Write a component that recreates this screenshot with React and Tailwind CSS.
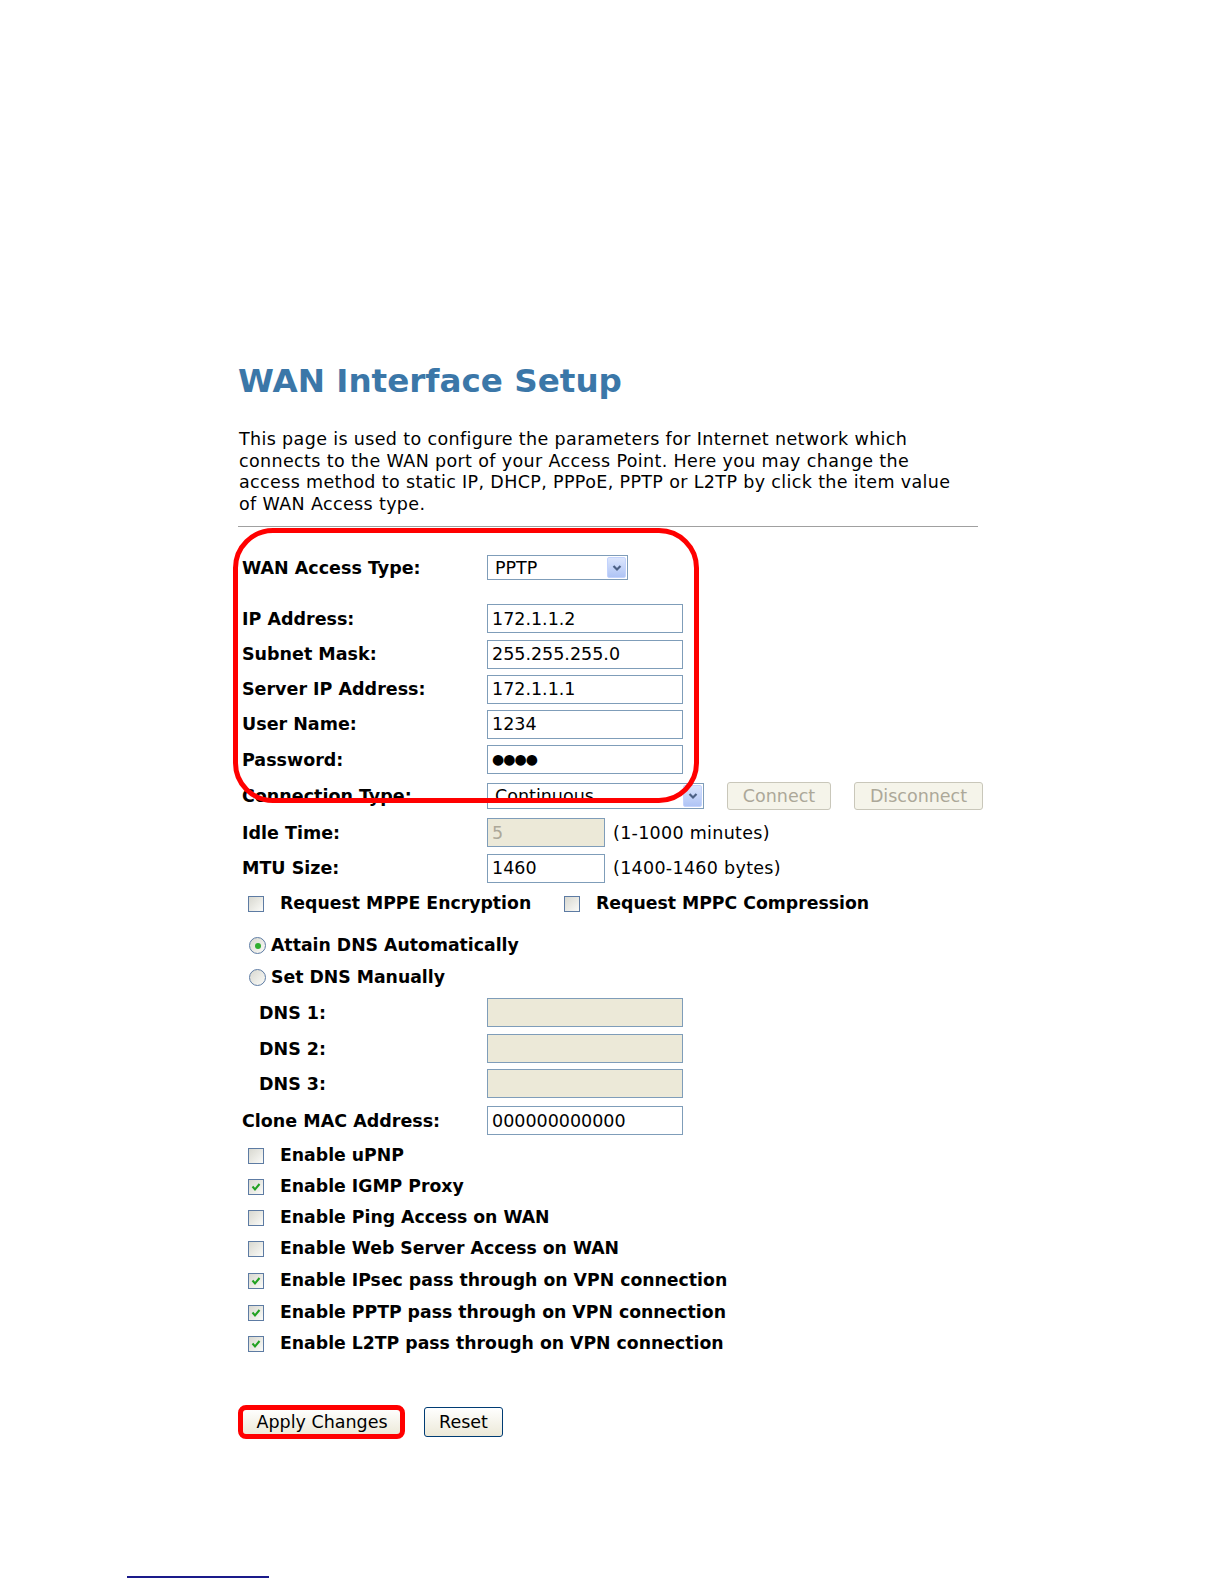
import React from "react";

const inputCls =
  "w-[196px] h-[29px] border border-[#7f9db9] bg-white px-[4px] text-[17.5px] text-black outline-none";
const disabledInputCls =
  "w-[196px] h-[29px] border border-[#7f9db9] bg-[#ece9d8] px-[4px] text-[17.5px] text-[#aca899] outline-none";

function Chevron() {
  return (
    <svg width="10" height="8" viewBox="0 0 10 8">
      <polyline
        points="1.5,2 5,5.5 8.5,2"
        fill="none"
        stroke="#4d6185"
        strokeWidth="2.2"
      />
    </svg>
  );
}

function Select({ value, w, h }) {
  return (
    <div className={`${w} ${h} border border-[#7f9db9] bg-white flex items-center`}>
      <span className="pl-[7px] text-[17.5px] text-black">{value}</span>
      <span className="ml-auto mr-px h-[calc(100%-2px)] w-[19px] rounded-[2px] border border-[#c3d3fd] bg-gradient-to-b from-[#dbe5fc] to-[#afc4f5] flex items-center justify-center">
        <Chevron />
      </span>
    </div>
  );
}

function Checkbox({ checked }) {
  return (
    <span className="w-[16px] h-[16px] shrink-0 border border-[#5d7ba3] bg-gradient-to-br from-[#d8d8d0] to-[#fbfbf8] flex items-center justify-center">
      {checked && (
        <svg width="12" height="12" viewBox="0 0 12 12">
          <polyline
            points="2.5,5.5 5,8.5 9.5,3"
            fill="none"
            stroke="#21a121"
            strokeWidth="2"
          />
        </svg>
      )}
    </span>
  );
}

function Radio({ checked }) {
  return (
    <span className="w-[17px] h-[17px] shrink-0 rounded-full border border-[#5d7ba3] bg-gradient-to-br from-[#d8d8d0] to-[#fbfbf8] flex items-center justify-center">
      {checked && (
        <span className="w-[6px] h-[6px] rounded-full bg-[#2fae2f]" />
      )}
    </span>
  );
}

function Label({ children }) {
  return (
    <div className="w-[245px] shrink-0 font-bold text-[17.5px] text-black whitespace-nowrap">
      {children}
    </div>
  );
}

function CheckRow({ h, checked, children }) {
  return (
    <div className={`${h} flex items-center pl-[6px]`}>
      <Checkbox checked={checked} />
      <span className="ml-[16px] font-bold text-[17.3px] text-black whitespace-nowrap">
        {children}
      </span>
    </div>
  );
}

export default function App() {
  return (
    <div className="min-h-[1584px] bg-white font-['DejaVu_Sans','Liberation_Sans',sans-serif] text-black">
      <div className="pl-[239px] pt-[361px]">
        <h1 className="-ml-px h-[40px] leading-[40px] text-[32.6px] font-bold text-[#3b77a8] whitespace-nowrap">
          WAN Interface Setup
        </h1>
        <p className="mt-[28px] text-[17.5px] leading-[21.7px] tracking-[0.36px] text-black whitespace-nowrap">
          This page is used to configure the parameters for Internet network which
          <br />
          connects to the WAN port of your Access Point. Here you may change the
          <br />
          access method to static IP, DHCP, PPPoE, PPTP or L2TP by click the item value
          <br />
          of WAN Access type.
        </p>
        <div className="mt-[10px] -ml-px w-[740px] h-px bg-[#a0a0a0]" />

        <div className="relative mt-[23px] pl-[3px]">
          <div className="h-[36px] flex items-center">
            <Label>WAN Access Type:</Label>
            <Select value="PPTP" w="w-[141px]" h="h-[25px]" />
          </div>
          <div className="h-[15px]" />
          <div className="h-[36px] flex items-center">
            <Label>IP Address:</Label>
            <input readOnly className={inputCls} value="172.1.1.2" />
          </div>
          <div className="h-[35px] flex items-center">
            <Label>Subnet Mask:</Label>
            <input readOnly className={inputCls} value="255.255.255.0" />
          </div>
          <div className="h-[35px] flex items-center">
            <Label>Server IP Address:</Label>
            <input readOnly className={inputCls} value="172.1.1.1" />
          </div>
          <div className="h-[35px] flex items-center">
            <Label>User Name:</Label>
            <input readOnly className={inputCls} value="1234" />
          </div>
          <div className="h-[36px] flex items-center">
            <Label>Password:</Label>
            <div className="w-[196px] h-[29px] border border-[#7f9db9] bg-white pl-[4px] flex items-center text-[14px] tracking-[-1px] text-black">
              ●●●●
            </div>
          </div>
          <div className="h-[37px] flex items-center">
            <Label>Connection Type:</Label>
            <Select value="Continuous" w="w-[217px]" h="h-[26px]" />
            <button className="ml-[23px] w-[104px] h-[28px] rounded-[3px] border border-[#c9c7ba] bg-[#f5f4ea] text-[17.5px] text-[#aca899]">
              Connect
            </button>
            <button className="ml-[23px] w-[129px] h-[28px] rounded-[3px] border border-[#c9c7ba] bg-[#f5f4ea] text-[17.5px] text-[#aca899]">
              Disconnect
            </button>
          </div>
          <div className="h-[36px] flex items-center">
            <Label>Idle Time:</Label>
            <input
              readOnly
              className="w-[118px] h-[29px] border border-[#7f9db9] bg-[#ece9d8] px-[4px] text-[17.5px] text-[#aca899] outline-none"
              value="5"
            />
            <span className="ml-[8px] text-[17.5px] tracking-[0.3px] whitespace-nowrap">(1-1000 minutes)</span>
          </div>
          <div className="h-[35px] flex items-center">
            <Label>MTU Size:</Label>
            <input
              readOnly
              className="w-[118px] h-[29px] border border-[#7f9db9] bg-white px-[4px] text-[17.5px] text-black outline-none"
              value="1460"
            />
            <span className="ml-[8px] text-[17.5px] tracking-[0.3px] whitespace-nowrap">(1400-1460 bytes)</span>
          </div>
          <div className="h-[36px] flex items-center pl-[6px]">
            <div className="w-[316px] flex items-center">
              <Checkbox />
              <span className="ml-[16px] font-bold text-[17.3px] whitespace-nowrap">
                Request MPPE Encryption
              </span>
            </div>
            <Checkbox />
            <span className="ml-[16px] font-bold text-[17.3px] whitespace-nowrap">
              Request MPPC Compression
            </span>
          </div>
          <div className="h-[8px]" />
          <div className="h-[32px] flex items-center pl-[7px]">
            <Radio checked />
            <span className="ml-[5px] font-bold text-[17.3px] whitespace-nowrap">
              Attain DNS Automatically
            </span>
          </div>
          <div className="h-[32px] flex items-center pl-[7px]">
            <Radio />
            <span className="ml-[5px] font-bold text-[17.3px] whitespace-nowrap">
              Set DNS Manually
            </span>
          </div>
          <div className="h-[38px] flex items-center">
            <div className="w-[245px] shrink-0 pl-[17px] font-bold text-[17.5px]">DNS 1:</div>
            <input readOnly className={disabledInputCls} value="" />
          </div>
          <div className="h-[34px] flex items-center">
            <div className="w-[245px] shrink-0 pl-[17px] font-bold text-[17.5px]">DNS 2:</div>
            <input readOnly className={disabledInputCls} value="" />
          </div>
          <div className="h-[36px] flex items-center">
            <div className="w-[245px] shrink-0 pl-[17px] font-bold text-[17.5px]">DNS 3:</div>
            <input readOnly className={disabledInputCls} value="" />
          </div>
          <div className="h-[38px] flex items-center">
            <Label>Clone MAC Address:</Label>
            <input readOnly className={inputCls} value="000000000000" />
          </div>
          <CheckRow h="h-[32px]">Enable uPNP</CheckRow>
          <CheckRow h="h-[31px]" checked>Enable IGMP Proxy</CheckRow>
          <CheckRow h="h-[31px]">Enable Ping Access on WAN</CheckRow>
          <CheckRow h="h-[31px]">Enable Web Server Access on WAN</CheckRow>
          <CheckRow h="h-[32px]" checked>Enable IPsec pass through on VPN connection</CheckRow>
          <CheckRow h="h-[32px]" checked>Enable PPTP pass through on VPN connection</CheckRow>
          <CheckRow h="h-[31px]" checked>Enable L2TP pass through on VPN connection</CheckRow>

          <div className="pointer-events-none absolute left-[-6px] top-[-22px] w-[466px] h-[275px] rounded-[40px] border-[5px] border-[#ff0000]" />

          <div className="relative mt-[46px] h-[33px] flex items-center">
            <button className="w-[160px] h-[28px] rounded-[3px] border border-[#003c74] bg-gradient-to-b from-white to-[#ece9d8] text-[17.5px] text-black">
              Apply Changes
            </button>
            <button className="ml-[22px] w-[79px] h-[30px] rounded-[3px] border border-[#003c74] bg-gradient-to-b from-white to-[#ece9d8] text-[17.5px] text-black">
              Reset
            </button>
            <div className="pointer-events-none absolute left-[-4px] top-[-1px] w-[167px] h-[34px] rounded-[8px] border-[5px] border-[#ff0000]" />
          </div>
        </div>
      </div>
      <div className="mt-[137px] ml-[127px] w-[142px] h-[2px] bg-[#1a1a8a]" />
    </div>
  );
}
